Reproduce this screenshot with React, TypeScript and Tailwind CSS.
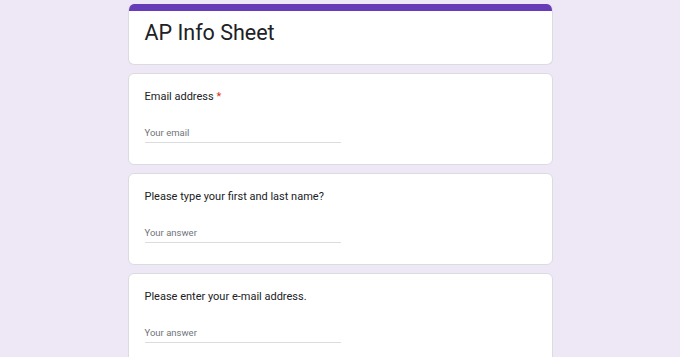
import React from 'react';

const questions = [
  { label: 'Email address', required: true, placeholder: 'Your email' },
  { label: 'Please type your first and last name?', required: false, placeholder: 'Your answer' },
  { label: 'Please enter your e-mail address.', required: false, placeholder: 'Your answer' },
];

const App: React.FC = () => {
  return (
    <div className="min-h-screen bg-[#ede7f6] font-['Roboto',sans-serif] text-[#202124]">
      <div className="mx-auto w-[425px] pt-1 flex flex-col gap-2">
        {/* Header */}
        <div className="bg-white rounded-[6px] border border-t-0 border-[#dadce0] overflow-hidden">
          <div className="h-[7px] bg-[#673ab7]" />
          <div className="px-4 pt-[6px] pb-[15px]">
            <h1 className="text-[21.5px] leading-[32px]">AP Info Sheet</h1>
          </div>
        </div>

        {questions.map((q) => (
          <div key={q.label} className="bg-white rounded-[6px] border border-[#dadce0] px-4 pt-[15px] pb-[21px]">
            <div className="text-[11px] leading-[16px]">
              {q.label}
              {q.required && <span className="text-[#d93025]"> *</span>}
            </div>
            <div className="mt-[21px] w-[196px] border-b border-[#dadce0] pb-[2px] text-[9.5px] leading-[14px] text-[#70757a]">
              {q.placeholder}
            </div>
          </div>
        ))}
      </div>
    </div>
  );
};

export default App;
